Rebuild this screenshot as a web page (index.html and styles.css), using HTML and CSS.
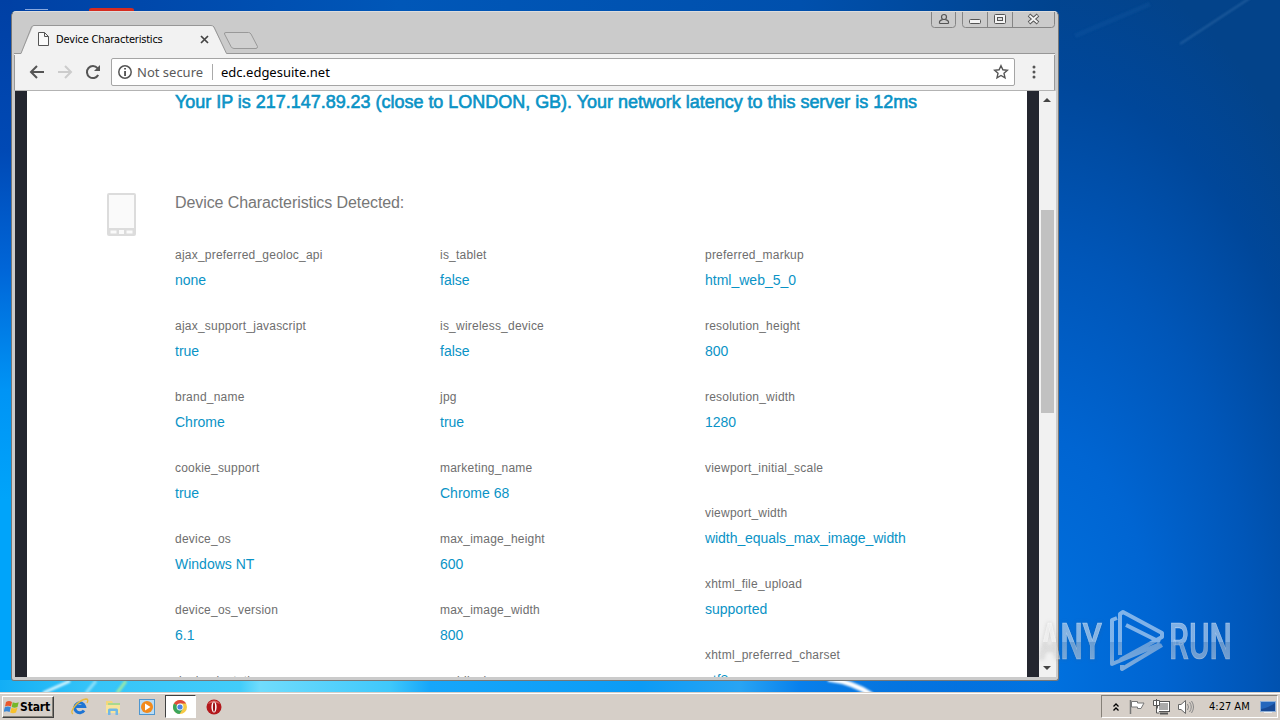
FILE: index.html
```html
<!DOCTYPE html>
<html lang="en">
<head>
<meta charset="utf-8">
<title>Device Characteristics</title>
<link rel="stylesheet" href="styles.css">
</head>
<body>
<div class="desktop">
  <svg class="wallpaper" viewBox="0 0 1280 720">
    <defs><filter id="soft"><feGaussianBlur stdDeviation="1"/></filter></defs>
    <g filter="url(#soft)">
      <path d="M43 693L70 681" stroke="#d9f6ff" stroke-width="3"/>
      <path d="M86 693L96 681" stroke="#8fe0f8" stroke-width="3"/>
      <path d="M117 693L126 681" stroke="#9be9a8" stroke-width="3"/>
      <path d="M828 679C845 681 860 687 872 695" stroke="#fff" stroke-width="5" fill="none"/>
      <path d="M1180 44L1250 -2" stroke="#5c8fc4" stroke-width="2" opacity=".35"/>
      <path d="M1075 36L1150 4" stroke="#3f78bb" stroke-width="5" opacity=".12"/>
    </g>
    <path d="M25 9.500h23" stroke="#8aa9df"/>
    <path d="M89 12V10q0-2 3-2h39q3 0 3 2v2z" fill="#d62c20"/>
  </svg>

  <main class="window">
    <header class="titlebar">
      <svg class="tabs" width="260" height="30" viewBox="0 0 260 30">
        <path d="M0 28.500H7L19.500 0.500H198.500L212.500 28.500H260V30H0z" fill="#f2f2f2"/>
        <path d="M0 28.500H7L17.500 2Q18.500 .5 20 .5H197Q199 .5 200 2L212.500 28.500H260" fill="none" stroke="#979797"/>
        <path d="M212 7.500H234.500Q236 7.500 237 9L243.500 21.500Q243.500 23.500 242 23.500H220Q218 23.500 217 21.500L210.500 9Q210 7.500 212 7.500z" fill="#d0d0d0" stroke="#999"/>
      </svg>
      <div class="tab">
        <svg class="page-icon" width="11" height="14" viewBox="0 0 11 14"><path d="M.5.500h6l4 4v9H.5zM6.500.500v4h4" fill="#fafafa" stroke="#555"/></svg>
        <span class="tab-title">Device Characteristics</span>
        <svg class="tab-close" width="9" height="9" viewBox="0 0 9 9"><path d="M1 1l7 7M8 1L1 8" stroke="#444" stroke-width="1.700"/></svg>
      </div>
      <svg class="caption" width="126" height="18" viewBox="0 0 126 18" fill="none">
        <path d="M.5 0V12.500Q.5 15.500 3.500 15.500H21.500Q24.500 15.500 24.500 12.500V0M31.500 0V12.500Q31.500 15.500 34.500 15.500H120.500Q123.500 15.500 123.500 12.500V0M56.500 0V15.500M81.500 0V15.500" stroke="#858585"/>
        <g transform="translate(0 -1)">
        <circle cx="13" cy="6" r="2.500" stroke="#555" stroke-width="1.200"/>
        <path d="M8.500 12.500V11q0-1.500 3-2.300M17.500 12.500V11q0-1.500-3-2.300M8.500 12.500h9" stroke="#555" stroke-width="1.200"/>
        <rect x="38.500" y="8.500" width="11" height="4" rx="1" fill="#f4f4f4" stroke="#555"/>
        <rect x="63.500" y="3.500" width="11" height="9" rx="1" fill="#f4f4f4" stroke="#555"/>
        <rect x="66.500" y="6.500" width="5" height="3" fill="#ddd" stroke="#555"/>
        <path d="M98 4l9 8M107 4l-9 8" stroke="#555" stroke-width="3.800"/>
        <path d="M98.500 4.500l8 7M106.500 4.500l-8 7" stroke="#f4f4f4" stroke-width="1.800"/>
        </g>
      </svg>
    </header>

    <nav class="toolbar">
      <svg width="16" height="16" viewBox="0 0 16 16" fill="none" stroke="#555" stroke-width="2"><path d="M15 8H2M8 2L2 8l6 6"/></svg>
      <svg width="16" height="16" viewBox="0 0 16 16" fill="none" stroke="#ccc" stroke-width="2"><path d="M1 8h13M8 2l6 6-6 6"/></svg>
      <svg width="16" height="16" viewBox="0 0 16 16"><path d="M13.200 11A6 6 0 1 1 12.500 4.200" fill="none" stroke="#555" stroke-width="2"/><path d="M15 1v6H9z" fill="#555"/></svg>
      <div class="omnibox">
        <svg width="14" height="14" viewBox="0 0 14 14"><circle cx="7" cy="7" r="6.200" fill="none" stroke="#555" stroke-width="1.500"/><path d="M6.200 3h1.700v1.600H6.200zM6.200 5.900h1.700v5H6.200z" fill="#444"/></svg>
        <span class="security">Not secure</span>
        <span class="url">edc.edgesuite.net</span>
        <svg class="star" width="16" height="16" viewBox="0 0 16 16"><path d="M8 1.700l1.900 4.100 4.500.5-3.400 3 1 4.500-4-2.300-4 2.300 1-4.500-3.400-3 4.500-.5z" fill="none" stroke="#555" stroke-width="1.400"/></svg>
      </div>
      <svg class="menu" width="4" height="14" viewBox="0 0 4 14" fill="#555"><circle cx="2" cy="2" r="1.500"/><circle cx="2" cy="7" r="1.500"/><circle cx="2" cy="12" r="1.500"/></svg>
    </nav>

    <section class="viewport">
      <div class="page">
        <h1>Your IP is 217.147.89.23 (close to LONDON, GB). Your network latency to this server is 12ms</h1>
        <div class="detected">
          <svg class="phone" width="30" height="44" viewBox="0 0 30 44"><rect x="1" y="1" width="29" height="43" rx="2" fill="#dcdcdc"/><rect x="3" y="3" width="25" height="33" fill="#fafafa"/><path d="M4.500 38.500h6v3h-6zM13 38h5v4h-5zM20.500 38.500h6v3h-6z" fill="#fafafa"/></svg>
          <div class="info">
            <h2>Device Characteristics Detected:</h2>
            <div class="columns">
              <dl>
                <dt>ajax_preferred_geoloc_api</dt><dd>none</dd>
                <dt>ajax_support_javascript</dt><dd>true</dd>
                <dt>brand_name</dt><dd>Chrome</dd>
                <dt>cookie_support</dt><dd>true</dd>
                <dt>device_os</dt><dd>Windows NT</dd>
                <dt>device_os_version</dt><dd>6.1</dd>
                <dt>dual_orientation</dt>
              </dl>
              <dl>
                <dt>is_tablet</dt><dd>false</dd>
                <dt>is_wireless_device</dt><dd>false</dd>
                <dt>jpg</dt><dd>true</dd>
                <dt>marketing_name</dt><dd>Chrome 68</dd>
                <dt>max_image_height</dt><dd>600</dd>
                <dt>max_image_width</dt><dd>800</dd>
                <dt>mobile_browser</dt>
              </dl>
              <dl>
                <dt>preferred_markup</dt><dd>html_web_5_0</dd>
                <dt>resolution_height</dt><dd>800</dd>
                <dt>resolution_width</dt><dd>1280</dd>
                <dt class="empty">viewport_initial_scale</dt>
                <dt>viewport_width</dt><dd class="long">width_equals_max_image_width</dd>
                <dt>xhtml_file_upload</dt><dd>supported</dd>
                <dt>xhtml_preferred_charset</dt><dd>utf8</dd>
              </dl>
            </div>
          </div>
        </div>
      </div>
      <div class="scrollbar">
        <svg width="8" height="4" viewBox="0 0 8 4"><path d="M0 4L4 0l4 4z" fill="#444"/></svg>
        <div class="thumb"></div>
        <svg width="8" height="4" viewBox="0 0 8 4"><path d="M0 0l4 4 4-4z" fill="#444"/></svg>
      </div>
    </section>
  </main>

  <svg class="watermark" width="200" height="70" viewBox="1036 606 200 70">
    <defs>
      <linearGradient id="wm" gradientUnits="userSpaceOnUse" x1="0" y1="610" x2="0" y2="670">
        <stop offset="0" stop-color="#fff" stop-opacity=".5"/><stop offset=".53" stop-color="#fff" stop-opacity=".5"/>
        <stop offset=".54" stop-color="#dedede" stop-opacity=".45"/><stop offset="1" stop-color="#e4e4e4" stop-opacity=".55"/>
      </linearGradient>
    </defs>
    <g fill="url(#wm)" stroke="url(#wm)" stroke-width=".6" font-family="Roboto, Liberation Sans, sans-serif" font-size="50" font-weight="500">
      <text class="mark" x="1039" y="659" textLength="63" lengthAdjust="spacingAndGlyphs">ANY</text>
      <text x="1169" y="659" textLength="63" lengthAdjust="spacingAndGlyphs">RUN</text>
    </g>
    <path d="M1117 618L1112 620V664L1160 644M1126 625L1160 642M1120 655V614L1123 612L1162 633V637L1120 660M1162 645L1122 669V665" fill="none" stroke="url(#wm)" stroke-width="4" stroke-linejoin="round"/>
  </svg>

  <footer class="taskbar">
    <div class="start">
      <svg width="16" height="16" viewBox="0 0 16 16"><path d="M2 3q3-2 6 0L7 7.500q-3-1.500-6 0z" fill="#e9572b"/><path d="M8.700 3.300q3 1.500 6 0L13.500 8q-3 1.500-5.800 0z" fill="#76b729"/><path d="M.8 8.300q3-1.500 6 0L5.600 13q-3-1.700-6 0z" fill="#3a87d5"/><path d="M7.500 8.800q3 1.500 6 0L12 13.500q-3 1.500-5.800 0z" fill="#f7c12d"/></svg>
      <b>Start</b>
    </div>
    <div class="launch">
      <svg width="18" height="18" viewBox="0 0 18 18"><path d="M13 12.500A5 5 0 1 1 13.600 8.500H5" fill="none" stroke="#1d74d4" stroke-width="3"/><path d="M2 16Q-1 14 4 8T15 1q3 0 1 4" fill="none" stroke="#e8b93a" stroke-width="1.300"/></svg>
    </div>
    <div class="launch">
      <svg width="18" height="18" viewBox="0 0 18 18"><path d="M2 3h6l1 2h7v10H2z" fill="#f3d77a"/><path d="M4 5h12v4H4z" fill="#a9d890"/><path d="M2 7h14v8H2z" fill="#f8e49b"/><path d="M4 17v-5q0-1.500 1.500-1.500h7Q14 10.500 14 12v5h-2.500v-4h-5v4z" fill="#71b8e6"/></svg>
    </div>
    <div class="launch">
      <svg width="18" height="18" viewBox="0 0 18 18"><rect x="1.500" y="1.500" width="15" height="15" fill="#b9dcf5" stroke="#4e96cf"/><circle cx="9" cy="9" r="6" fill="#f28a1c"/><path d="M7 5.500L12.500 9 7 12.500z" fill="#fff"/></svg>
    </div>
    <div class="launch active">
      <svg width="16" height="16" viewBox="0 0 16 16"><circle cx="8" cy="8" r="7" fill="#f6c945"/><path d="M8 8L1.900 4.500A7 7 0 0 1 14.100 4.500H8z" fill="#df4a3c"/><path d="M1.900 4.500A7 7 0 0 0 7.500 15L11 9.700 8 8z" fill="#3ca55c"/><circle cx="8" cy="8" r="3.400" fill="#fff"/><circle cx="8" cy="8" r="2.600" fill="#4a83e2"/></svg>
    </div>
    <div class="launch last">
      <svg width="16" height="16" viewBox="0 0 16 16"><circle cx="8" cy="8" r="7.500" fill="#b3181c"/><path d="M2 5a7 7 0 0 1 12 0q-6-3-12 0z" fill="#d9605c"/><ellipse cx="8" cy="8" rx="2.600" ry="5.500" fill="#fff"/><ellipse cx="8" cy="8" rx="1.100" ry="4.800" fill="#9b1115"/></svg>
    </div>
    <div class="tray">
      <svg class="chevrons" width="6" height="8" viewBox="0 0 6 8"><path d="M.5 3.500L3 1l2.500 2.500M.5 7.500L3 5l2.500 2.500" fill="none" stroke="#000" stroke-width="1.300"/></svg>
      <svg class="flag" width="16" height="16" viewBox="0 0 16 16"><path d="M1.500 1v14" stroke="#777" stroke-width="1.500"/><path d="M2.500 2.500h6v1.500h6.500l-3 5.500H8.500V8h-6z" fill="#fff" stroke="#777"/></svg>
      <svg class="net" width="17" height="16" viewBox="0 0 17 16"><rect x="5.500" y="3.500" width="10" height="8" fill="#aaa" stroke="#fff"/><rect x="4.500" y="2.500" width="12" height="10" fill="none" stroke="#555"/><path d="M7 14.500h8" stroke="#555" stroke-width="2"/><path d="M.5 1.500v5h6v-5zM3.500 0v6M3.500 7v7h3" fill="#fff" stroke="#555"/></svg>
      <svg class="sound" width="17" height="16" viewBox="0 0 17 16"><path d="M1.500 5.500H4L8.500 1.500v13L4 10.500H1.500z" fill="#fff" stroke="#666"/><path d="M10.500 5q2 3 0 6M12.500 3q3.500 5 0 10M14.500 2q4 6 0 12" fill="none" stroke="#888"/></svg>
      <span class="clock">4:27 AM</span>
      <svg class="show" width="16" height="14" viewBox="0 0 16 14"><rect x=".5" y="1.500" width="15" height="10" fill="#2467bd" stroke="#8fb0d8"/><path d="M1 9Q8 8 15 3v8H1z" fill="#174a96"/><path d="M4 12.500h8" stroke="#eee"/></svg>
    </div>
  </footer>
</div>
</body>
</html>
```
FILE: styles.css
```css
* { box-sizing: border-box; }
body { margin: 0; width: 1280px; height: 720px; overflow: hidden; }
svg { display: block; flex: none; }
.desktop {
  position: relative; width: 1280px; height: 720px; overflow: hidden;
  display: flex; flex-direction: column; justify-content: flex-end;
  font-family: "Liberation Sans", Arial, sans-serif;
  background:
    linear-gradient(90deg, #13aef5 0, #35c4f8 90px, #42ccfa 240px, #70dcfc 260px, #3fc8fb 390px, #16a6fa 430px, #0c9bf5 640px, #28a4f3 740px, #0880ec 800px, rgba(0,112,224,0) 1060px) 0 680px / 1280px 14px no-repeat,
    linear-gradient(180deg, #0040a4 0, #0049b5 150px, #0066d8 270px, #0094f5 390px, #00a4fa 500px) 0 0 / 12px 720px no-repeat,
    linear-gradient(90deg, #0040a4 0, #0057b8 400px, #0050ad 800px, #00438e 1060px, rgba(0,67,142,0) 1060px) 0 0 / 1280px 11px no-repeat,
    radial-gradient(ellipse 370px 720px at 1040px 670px, #0072e0 0, #0065d2 32%, #0056b8 58%, #00479a 82%, #03438a 100%);
}
.wallpaper { position: absolute; left: 0; top: 0; width: 1280px; height: 720px; }

.window {
  position: absolute; left: 11px; top: 11px; width: 1048px; height: 670px;
  display: flex; flex-direction: column;
  background: #cbcbcb; border: 1px solid #777; border-top-color: #ddd;
  border-radius: 5px 5px 3px 3px; padding: 0 3px 3px 2px;
}
.titlebar { display: flex; position: relative; height: 43px; flex: none; padding-top: 13px; }
.tabs { position: absolute; left: 0; top: 13px; }
.tab { position: relative; display: flex; align-items: center; height: 28px; padding-left: 24px; }
.tab-title {
  width: 150px; margin-left: 7px; white-space: nowrap; color: #000; letter-spacing: -.2px;
  font: 11px "DejaVu Sans Condensed", "DejaVu Sans", sans-serif; font-stretch: condensed;
}
.tab-close { margin-left: -6px; margin-top: 1px; }
.caption { margin: -13px -2px 0 auto; }
.toolbar {
  height: 36px; flex: none; display: flex; align-items: center;
  padding: 0 17px 2px 15px; gap: 12px; background: #f2f2f2; border-bottom: 1px solid #b3b3b3;
  box-shadow: inset 1px 0 #999, inset -1px 0 #999;
}
.titlebar::after { content: ""; position: absolute; left: 260px; right: 0; bottom: 1px; height: 1px; background: #979797; box-shadow: 0 1px #f2f2f2; }
.omnibox {
  width: 904px; height: 28px; margin-left: -2px; display: flex; align-items: center;
  padding: 0 5px 0 6px; background: #fff; border: 1px solid #a5a5a5; border-radius: 2px;
  font: 13px "Noto Sans", sans-serif; white-space: nowrap;
}
.security { width: 76px; margin-left: 5px; color: #5a5a5a; border-right: 1px solid #aaa; line-height: 16px; }
.url { margin-left: 8px; color: #000; line-height: 16px; }
.star { margin-left: auto; }
.menu { margin-left: 5px; }

.viewport {
  height: 586px; flex: none; display: flex; overflow: hidden; background: #23262f;
  margin: 0 -1px 0 1px; padding-left: 12px;
}
.page { width: 1000px; margin-right: 12px; background: #fff; overflow: hidden; }
h1 {
  margin: 0 0 80px 148px; height: 22px; line-height: 22px; letter-spacing: -.025px;
  font-size: 18px; font-weight: 400; color: #0a93c6; white-space: nowrap;
  -webkit-text-stroke: .6px #0a93c6;
}
.detected { display: flex; padding-left: 79px; }
.phone { margin-top: -1px; }
.info { margin-left: 39px; width: 795px; }
h2 { margin: 0; height: 53px; line-height: 19px; font-size: 16px; font-weight: 400; color: #777; letter-spacing: -.09px; }
.columns { display: grid; grid-template-columns: repeat(3, 265px); }
dl { margin: 0; white-space: nowrap; }
dt { height: 25px; line-height: 19px; font-size: 12px; color: #6e6e6e; letter-spacing: .22px; }
dt.empty { height: 45px; }
dd { margin: 0; height: 46px; line-height: 19px; font-size: 14px; color: #0a93c6; }
dd.long { letter-spacing: -.06px; }
.scrollbar { width: 17px; background: #f1f1f1; padding: 7px 0 7px; display: flex; flex-direction: column; align-items: center; }
.scrollbar svg:last-child { margin-top: auto; }
.thumb { width: 13px; height: 203px; margin-top: 108px; margin-right: 1px; background: #c1c1c1; flex: none; }
.scrollbar svg { margin-right: 2px; }

.watermark { position: absolute; left: 1036px; top: 606px; }
.mark { filter: drop-shadow(0 0 2px rgba(80,80,80,.35)); }

.taskbar {
  position: relative; height: 28px; display: flex; align-items: center; padding-left: 2px;
  background: #d6cfc8; border-top: 1px solid #d6cfc8; box-shadow: inset 0 1px #fff;
}
.start {
  width: 52px; height: 22px; margin-right: 9px; display: flex; align-items: center; padding-left: 1px;
  border: 1px solid; border-color: #fff #404040 #404040 #fff; box-shadow: inset -1px -1px #848077;
  font: 12px "DejaVu Sans Condensed", sans-serif; font-stretch: condensed; color: #000; letter-spacing: -.15px;
}
.launch { width: 33.500px; height: 23px; display: flex; align-items: center; justify-content: center; flex: none; }
.active { width: 31px; background: #fff; border: 1px solid; border-color: #404040 #fff #fff #404040; margin: 0 1px; }
.last { margin-left: 1px; }
.tray {
  width: 177px; height: 23px; margin: 0 2px 0 auto; display: flex; align-items: center;
  border: 1px solid; border-color: #858078 #fff #fff #858078; padding-left: 11px;
}
.flag { margin-left: 10px; }
.net { margin-left: 8px; }
.sound { margin-left: 7px; }
.clock { width: 42px; margin-left: 15px; white-space: nowrap; font: 11px "DejaVu Sans Condensed", sans-serif; font-stretch: condensed; color: #000; }
.show { margin-left: 9px; }
```
